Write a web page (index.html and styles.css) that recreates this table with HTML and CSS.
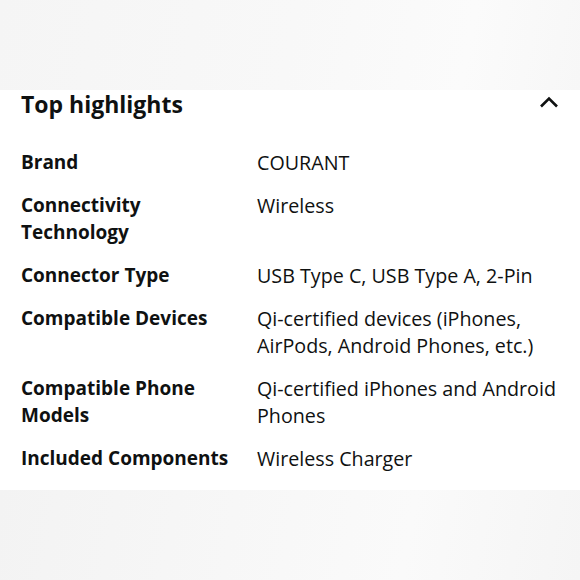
FILE: index.html
```html
<!DOCTYPE html>
<html>
<head>
<meta charset="utf-8">
<link rel="stylesheet" href="styles.css">
</head>
<body>
<div class="top-band"></div>
<section class="panel">
  <div class="header">
    <h2 class="title">Top highlights</h2>
    <svg class="chevron" width="20" height="12" viewBox="0 0 20 12"><path d="M2 10.5 L10 2.5 L18 10.5" fill="none" stroke="#0f1111" stroke-width="2.6"/></svg>
  </div>
  <div class="specs">
    <div class="label">Brand</div><div class="value">COURANT</div>
    <div class="label">Connectivity Technology</div><div class="value">Wireless</div>
    <div class="label">Connector Type</div><div class="value">USB Type C, USB Type A, 2-Pin</div>
    <div class="label">Compatible Devices</div><div class="value">Qi-certified devices (iPhones, AirPods, Android Phones, etc.)</div>
    <div class="label">Compatible Phone Models</div><div class="value">Qi-certified iPhones and Android Phones</div>
    <div class="label">Included Components</div><div class="value">Wireless Charger</div>
  </div>
</section>
<div class="bottom-band"></div>
</body>
</html>
```
FILE: styles.css
```css
html, body {
  margin: 0;
  padding: 0;
  height: 100%;
}
body {
  background: #f6f6f6;
  font-family: "Open Sans", "Noto Sans", sans-serif;
  color: #0f1111;
  display: flex;
  flex-direction: column;
}
.top-band {
  height: 90px;
  flex: none;
  background: linear-gradient(100deg, #f5f5f5 0%, #f8f8f8 50%, #fbfbfb 80%, #f7f7f7 100%);
}
.panel {
  background: #ffffff;
  padding: 0 21px 18px 21px;
}
.header {
  display: flex;
  justify-content: space-between;
  align-items: flex-start;
}
.title {
  margin: 0;
  font-size: 23px;
  line-height: 28px;
  font-weight: 700;
}
.chevron {
  margin-top: 6px;
}
.specs {
  margin-top: 31px;
  display: grid;
  grid-template-columns: 236px 1fr;
  row-gap: 16px;
  font-size: 19px;
  line-height: 27px;
}
.label {
  font-weight: 700;
  padding-right: 16px;
}
.value {
  font-weight: 400;
  font-size: 19.7px;
}
.bottom-band {
  flex: 1;
  background: linear-gradient(100deg, #f3f3f3 0%, #f7f7f7 40%, #fafafa 70%, #f5f5f5 100%);
}
```
